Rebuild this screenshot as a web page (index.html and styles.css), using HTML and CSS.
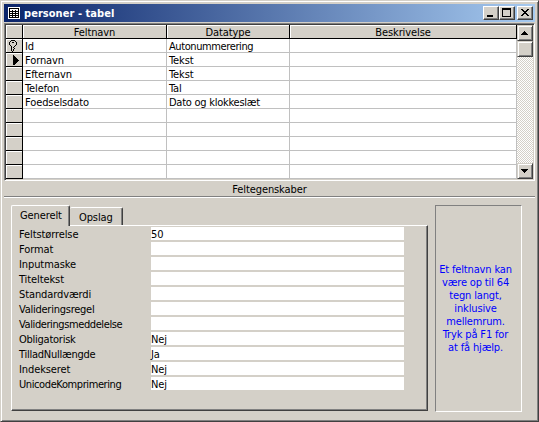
FILE: index.html
```
<!DOCTYPE html>
<html lang="da">
<head>
<meta charset="utf-8">
<title>personer - tabel</title>
<link rel="stylesheet" href="styles.css">
</head>
<body>
<main class="window">
  <header class="titlebar">
    <svg class="app-icon" width="12" height="12" viewBox="0 0 12 12" shape-rendering="crispEdges"><path fill="#fff" d="M0 0h12v12H0z"/><path fill="#000" d="M1 1h10v1H1z"/><path stroke="#000" d="M1 4.5h10M1 6.5h10M1 8.5h10M1 10.5h10M1.5 2v9M4.5 3v8M7.5 3v8M10.5 2v9" stroke-width="1"/></svg>
    <h1>personer - tabel</h1>
    <button class="btn cap" aria-label="Minimer"><svg width="12" height="10" viewBox="0 0 12 10" shape-rendering="crispEdges"><path d="M2 7h6v2H2z"/></svg></button>
    <button class="btn cap" aria-label="Maksimer"><svg width="12" height="10" viewBox="0 0 12 10" shape-rendering="crispEdges"><path fill-rule="evenodd" d="M1 0h9v9H1zM2 2v6h7V2z"/></svg></button>
    <button class="btn cap close" aria-label="Luk"><svg width="12" height="10" viewBox="0 0 12 10" shape-rendering="crispEdges"><path d="M2 1h2v1h1v1h2V2h1V1h2v1H9v1H8v1H7v1h1v1h1v1h1v1H8V7H7V6H5v1H4v1H2V7h1V6h1V5h1V4H4V3H3V2H2z"/></svg></button>
  </header>
  <section class="sheet">
    <div class="grid">
      <div class="row head"><i class="sel"></i><b>Feltnavn</b><b>Datatype</b><b>Beskrivelse</b></div>
      <div class="row"><i class="sel"><svg width="16" height="12" viewBox="-1 0 16 12" shape-rendering="crispEdges"><path d="M4 0h4v1H4zM3 1h1v1H3zM8 1h1v1H8zM2 2h1v3H2zM5 2h2v1H5zM9 2h1v3H9zM3 5h1v1H3zM8 5h1v1H8zM4 6h1v5H4zM7 6h1v1H7zM6 7h1v1H6zM7 8h1v1H7zM6 9h1v2H6zM5 11h1v1H5z"/></svg></i><span>Id</span><span class="tight">Autonummerering</span><span></span></div>
      <div class="row"><i class="sel"><svg width="16" height="12" viewBox="-1 0 16 12" shape-rendering="crispEdges"><path d="M6 1h1v1h1v1h1v1h1v1h1v1h1v1h-1v1h-1v1H9v1H8v1H6z"/></svg></i><span>Fornavn</span><span>Tekst</span><span></span></div>
      <div class="row"><i class="sel"></i><span>Efternavn</span><span>Tekst</span><span></span></div>
      <div class="row"><i class="sel"></i><span>Telefon</span><span>Tal</span><span></span></div>
      <div class="row"><i class="sel"></i><span>Foedselsdato</span><span class="snug">Dato og klokkeslæt</span><span></span></div>
      <div class="row"><i class="sel"></i><span></span><span></span><span></span></div>
      <div class="row"><i class="sel"></i><span></span><span></span><span></span></div>
      <div class="row"><i class="sel"></i><span></span><span></span><span></span></div>
      <div class="row"><i class="sel"></i><span></span><span></span><span></span></div>
      <div class="row"><i class="sel"></i><span></span><span></span><span></span></div>
    </div>
    <div class="scroll">
      <button class="btn" aria-label="Op"><svg width="12" height="12" viewBox="0 0 12 12" shape-rendering="crispEdges"><path d="M5 4h1v1h1v1h1v1h1v1H2V7h1V6h1V5h1z"/></svg></button>
      <div class="btn"></div>
      <button class="btn down" aria-label="Ned"><svg width="12" height="12" viewBox="0 0 12 12" shape-rendering="crispEdges"><path d="M2 4h7v1H8v1H7v1H6v1H5V7H4V6H3V5H2z"/></svg></button>
    </div>
  </section>
  <h2 class="divider">Feltegenskaber</h2>
  <section class="lower">
    <div class="props">
      <nav class="tabs"><div class="tab active">Generelt</div><div class="tab">Opslag</div></nav>
      <div class="panel">
        <div class="prop"><label>Feltstørrelse</label><span>50</span></div>
        <div class="prop"><label>Format</label><span></span></div>
        <div class="prop"><label>Inputmaske</label><span></span></div>
        <div class="prop"><label>Titeltekst</label><span></span></div>
        <div class="prop"><label>Standardværdi</label><span></span></div>
        <div class="prop"><label class="snug">Valideringsregel</label><span></span></div>
        <div class="prop"><label class="tight">Valideringsmeddelelse</label><span></span></div>
        <div class="prop"><label class="snug">Obligatorisk</label><span>Nej</span></div>
        <div class="prop"><label class="snug">TilladNullængde</label><span>Ja</span></div>
        <div class="prop"><label>Indekseret</label><span>Nej</span></div>
        <div class="prop"><label class="tight">UnicodeKomprimering</label><span>Nej</span></div>
      </div>
    </div>
    <aside class="info">Et feltnavn kan<br>være op til 64<br>tegn langt,<br>inklusive<br>mellemrum.<br>Tryk på F1 for<br>at få hjælp.</aside>
  </section>
</main>
</body>
</html>
```
FILE: styles.css
```
* { box-sizing: border-box; }
body { margin: 0; overflow: hidden; background: #d4d0c8; }
.window {
  width: 539px; height: 422px; padding: 3px;
  border: solid; border-width: 1px; border-color: #d4d0c8 #404040 #404040 #d4d0c8;
  box-shadow: inset 1px 1px #fff, inset -1px -1px #808080;
  background: #d4d0c8; color: #000;
  font: 11px/13px "DejaVu Sans Condensed", "DejaVu Sans", sans-serif;
  font-stretch: condensed; letter-spacing: -0.1px;
}
h1, h2 { margin: 0; font-size: inherit; font-weight: normal; }
.tight { letter-spacing: -0.4px; }
.snug { letter-spacing: -0.25px; }
.titlebar {
  height: 18px; display: flex; align-items: center; padding: 0 2px 0 4px;
  background: linear-gradient(to right, #0a246a, #a6caf0);
}
.app-icon { margin-right: 4px; }
.titlebar h1 { flex: 1; color: #fff; font-weight: bold; letter-spacing: 0.05px; white-space: nowrap; }
.btn {
  flex: none; display: block; width: 16px; height: 16px; padding: 1px; margin: 0;
  background: #d4d0c8; border: 1px solid; border-color: #d4d0c8 #404040 #404040 #d4d0c8;
  box-shadow: inset 1px 1px #fff, inset -1px -1px #808080;
}
.btn svg { display: block; }
.cap { height: 14px; border-color: #fff #404040 #404040 #fff; box-shadow: inset -1px -1px #808080; }
.close { margin-left: 2px; }
.sheet {
  display: flex; height: 158px; margin-top: 1px; width: 531px;
  border: solid; border-width: 1px; border-color: #808080 #fff #fff #808080;
  box-shadow: inset 1px 1px #404040, inset -1px -1px #d4d0c8;
  padding: 1px;
}
.grid { width: 511px; background: #fff; }
.row { display: grid; grid-template-columns: 17px 144px 123px 227px; height: 14px; }
.row span { border: solid #c0c0c0; border-width: 0 1px 1px 0; padding-left: 2px; white-space: nowrap; line-height: 15px; height: 14px; }
.row b, .sel { background: #d4d0c8; border: solid #000; border-width: 0 1px 1px 0; box-shadow: inset 1px 1px #fff; font-weight: normal; text-align: center; height: 14px; line-height: 15px; }
.sel svg { display: block; margin-top: 1px; }
.scroll {
  width: 16px; display: flex; flex-direction: column;
  background: repeating-conic-gradient(#fff 0 25%, #d4d0c8 0 50%) 0 0 / 2px 2px;
}
.down { margin-top: auto; }
.divider { height: 16px; padding-top: 2px; text-align: center; border-bottom: 1px solid #808080; box-shadow: 0 1px #fff; line-height: 13px; }
.lower { display: flex; justify-content: space-between; padding: 8px 13px 0 7px; }
.props { width: 417px; }
.tabs { display: flex; align-items: flex-end; height: 20px; }
.tab {
  width: 53px; height: 18px; padding: 3px 0 0 9px; border: solid; border-width: 1px 1px 0 0;
  border-color: #fff #404040 #404040 #fff; border-radius: 2px 2px 0 0; box-shadow: inset -1px 0 #808080;
}
.tab.active { width: 59px; height: 21px; margin-bottom: -1px; border-left-width: 1px; background: #d4d0c8; padding: 3px 0 0 8px; z-index: 1; }
.panel {
  height: 186px; padding: 1px 0 0 7px; border: 1px solid; border-color: #fff #404040 #404040 #fff;
  box-shadow: inset -1px -1px #808080;
}
.prop { display: flex; height: 15px; }
.prop label { width: 132px; line-height: 15px; white-space: nowrap; }
.prop span { width: 253px; height: 13px; background: #fff; line-height: 15px; }
.info {
  width: 87px; height: 207px; padding: 57px 6px 0 0; text-align: center; color: #00f; letter-spacing: -0.15px;
  border: 1px solid; border-color: #808080 #fff #fff #808080; white-space: nowrap;
}
```
